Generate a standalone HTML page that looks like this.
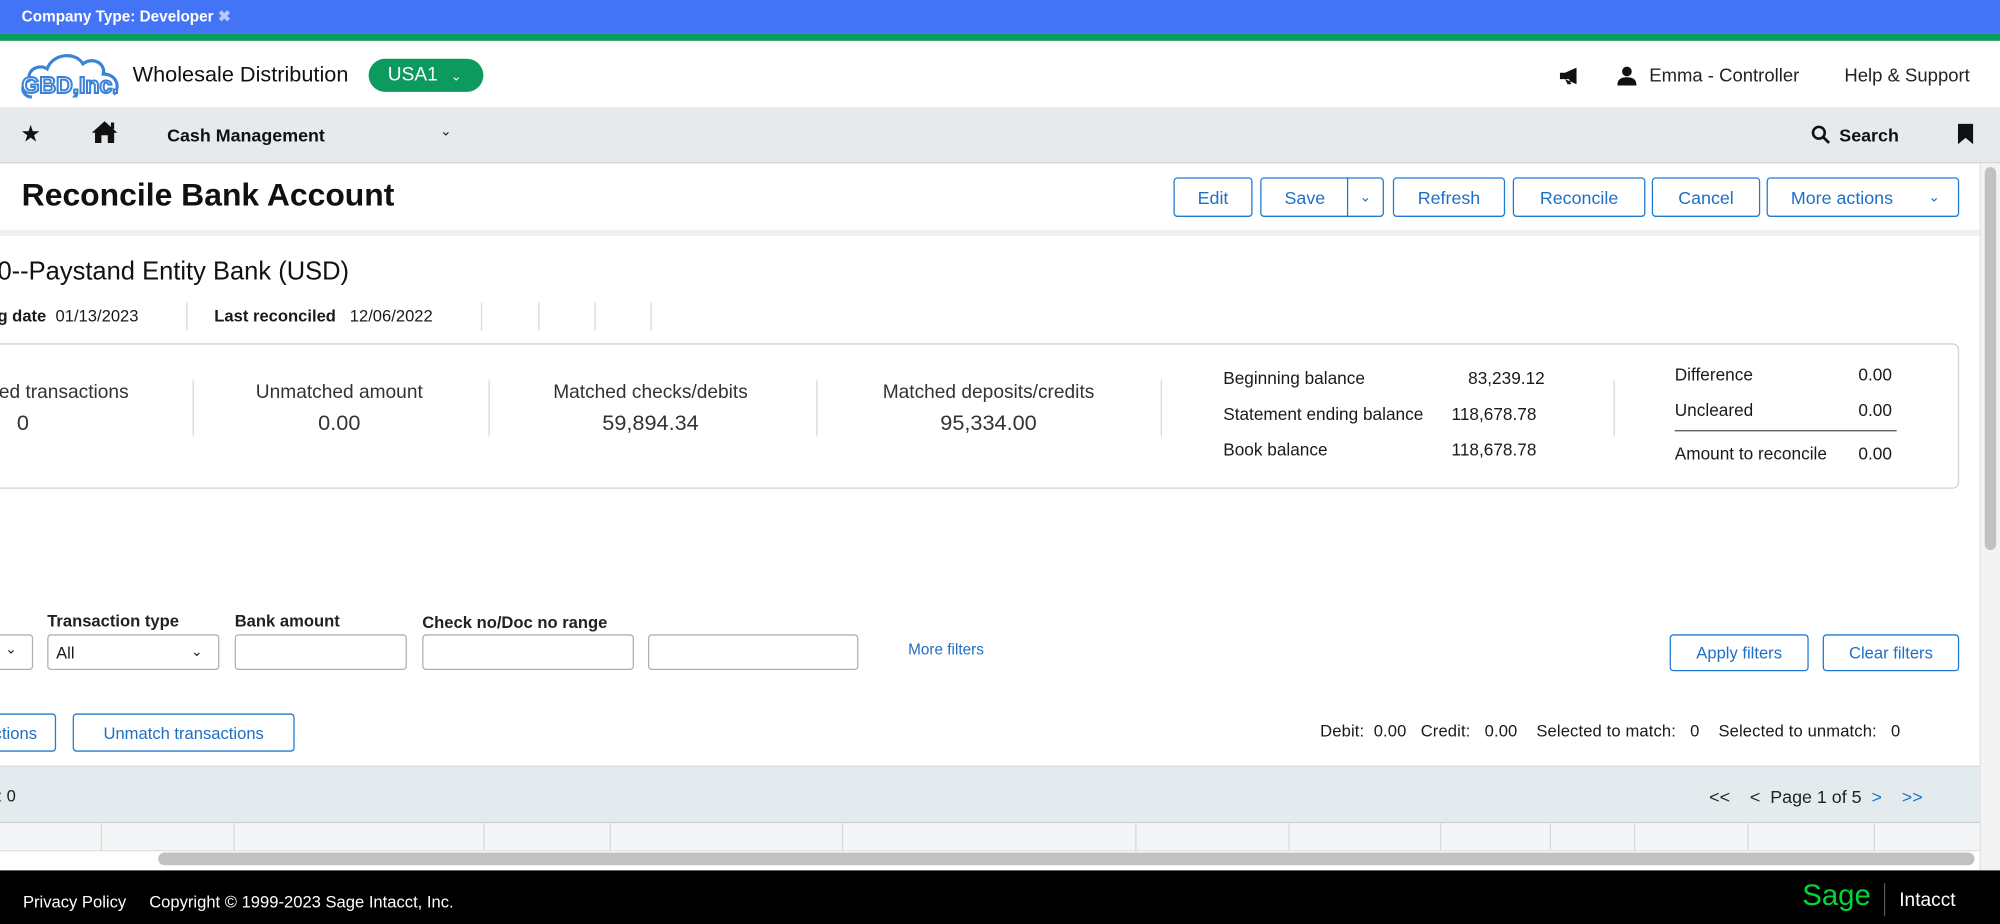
<!DOCTYPE html>
<html><head><meta charset="utf-8"><style>
*{box-sizing:border-box;margin:0;padding:0}
html,body{width:2000px;height:924px;overflow:hidden;background:#fff}
#f{position:absolute;left:0;top:0;width:1568px;height:724px;transform-origin:0 0;transform:scale(1.27551,1.27624);font-family:"Liberation Sans",sans-serif;color:#1a1a1a;font-size:13px;overflow:hidden}
.a{position:absolute;white-space:nowrap}
.btn{position:absolute;height:31px;border:1.5px solid #1f7ad1;border-radius:3px;color:#1f6fc4;font-size:14px;display:flex;align-items:center;justify-content:center;background:#fff}
.inp{position:absolute;height:28px;border:1px solid #aab2b8;border-radius:3px;background:#fff}
.lbl{position:absolute;font-size:13px;font-weight:bold;color:#222}
.vl{position:absolute;width:1px;background:#d5dadd}
.c{position:absolute;text-align:center;font-size:15px;color:#333}
</style></head><body><div id="f">
<div class="a" style="left:0;top:0;width:1568px;height:26px;background:#4474f6"></div>
<div class="a" style="left:17px;top:6px;color:#fff;font-weight:bold;font-size:12px">Company Type: Developer <span style="color:#b8c8f5">✖</span></div>
<div class="a" style="left:0;top:26px;width:1568px;height:6px;background:#0c9a5e"></div>
<svg class="a" style="left:15px;top:38px" width="82" height="42" viewBox="0 0 82 42"><path d="M10 38 C2 38 0 28 8 25 C6 16 16 12 22 16 C26 4 44 2 50 12 C58 6 68 12 66 20 C76 20 80 30 74 36" fill="none" stroke="#3b83d6" stroke-width="2.5"/><text x="40" y="35" text-anchor="middle" font-family="Liberation Sans" font-weight="bold" font-size="18" fill="#fff" stroke="#3b83d6" stroke-width="1.6">GBD,Inc.</text></svg>
<div class="a" style="left:104px;top:49px;font-size:17px;color:#111">Wholesale Distribution</div>
<div class="a" style="left:289px;top:46px;width:90px;height:26px;border-radius:13px;background:#0c9a5e;color:#fff;font-size:15px;line-height:26px;padding-left:15px">USA1 <span style="font-size:10px;margin-left:6px">⌄</span></div>
<svg class="a" style="left:1222px;top:52px" width="18" height="15" viewBox="0 0 18 15"><path d="M1 5h4l9-4v13l-9-4H1z M5 10l2 4h3l-2-4" fill="#111"/></svg>
<svg class="a" style="left:1268px;top:52px" width="15" height="15" viewBox="0 0 15 15"><circle cx="7.5" cy="4" r="3.8" fill="#111"/><path d="M0 15c0-5 3-6.5 7.5-6.5S15 10 15 15z" fill="#111"/></svg>
<div class="a" style="left:1293px;top:52px;font-size:14.5px;color:#222">Emma - Controller</div>
<div class="a" style="left:1446px;top:52px;font-size:14.5px;color:#222">Help &amp; Support</div>
<div class="a" style="left:0;top:84px;width:1568px;height:44px;background:#e6eaed;border-bottom:1px solid #d3d8db"></div>
<div class="a" style="left:16px;top:95px;font-size:18px;color:#111">★</div>
<svg class="a" style="left:71px;top:94px" width="22" height="19" viewBox="0 0 22 19"><path d="M11 1 L21 10 L18.5 10 L18.5 18 L13.5 18 L13.5 12 L8.5 12 L8.5 18 L3.5 18 L3.5 10 L1 10 Z" fill="#111"/><rect x="16" y="2" width="2.5" height="5" fill="#111"/></svg>
<div class="a" style="left:131px;top:97px;font-size:14px;font-weight:bold;color:#111;line-height:18px">Cash Management</div>
<div class="a" style="left:345px;top:96px;font-size:11px">⌄</div>
<svg class="a" style="left:1420px;top:98px" width="15" height="15" viewBox="0 0 15 15"><circle cx="6" cy="6" r="4.6" fill="none" stroke="#111" stroke-width="2"/><path d="M9.5 9.5L14 14" stroke="#111" stroke-width="2.2"/></svg>
<div class="a" style="left:1442px;top:98px;font-size:14px;font-weight:bold;color:#111">Search</div>
<svg class="a" style="left:1535px;top:97px" width="12" height="16" viewBox="0 0 12 16"><path d="M0 0h12v16L6 11 0 16z" fill="#111"/></svg>
<div class="a" style="left:17px;top:139px;font-size:25px;font-weight:bold;color:#111">Reconcile Bank Account</div>
<div class="btn" style="left:920px;top:139px;width:62px">Edit</div>
<div class="btn" style="left:988px;top:139px;width:70px;border-radius:3px 0 0 3px">Save</div>
<div class="btn" style="left:1056px;top:139px;width:29px;border-radius:0 3px 3px 0;font-size:11px">⌄</div>
<div class="btn" style="left:1092px;top:139px;width:88px">Refresh</div>
<div class="btn" style="left:1186px;top:139px;width:104px">Reconcile</div>
<div class="btn" style="left:1295px;top:139px;width:85px">Cancel</div>
<div class="btn" style="left:1385px;top:139px;width:151px;justify-content:flex-start;padding-left:18px">More actions<span style="position:absolute;right:14px;font-size:11px">⌄</span></div>
<div class="a" style="left:0;top:180px;width:1552px;height:5px;background:#eef1f3"></div>
<div class="a" style="left:1552px;top:128px;width:16px;height:554px;background:#f3f3f3;border-left:1px solid #e2e2e2"></div>
<div class="a" style="left:1556px;top:131px;width:9px;height:300px;background:#c1c1c1;border-radius:5px"></div>
<div class="a" style="left:-2px;top:202px;font-size:20px;color:#111">0--Paystand Entity Bank (USD)</div>
<div class="a" style="left:-2px;top:240px;font-size:13px"><b>g date</b>&nbsp;&nbsp;01/13/2023</div>
<div class="vl" style="left:146px;top:237px;height:22px"></div>
<div class="a" style="left:168px;top:240px;font-size:13px"><b>Last reconciled</b>&nbsp;&nbsp;&nbsp;12/06/2022</div>
<div class="vl" style="left:377px;top:237px;height:22px"></div>
<div class="vl" style="left:422px;top:237px;height:22px"></div>
<div class="vl" style="left:466px;top:237px;height:22px"></div>
<div class="vl" style="left:510px;top:237px;height:22px"></div>
<div class="a" style="left:-10px;top:269px;width:1546px;height:114px;border:1px solid #cdd3d7;border-radius:5px"></div>
<div class="c" style="left:-40px;top:299px;width:180px">ed transactions</div><div class="c" style="left:-72px;top:322px;width:180px;font-size:17px">0</div>
<div class="vl" style="left:151px;top:298px;height:44px"></div>
<div class="c" style="left:176px;top:299px;width:180px">Unmatched amount</div><div class="c" style="left:176px;top:322px;width:180px;font-size:17px">0.00</div>
<div class="vl" style="left:383px;top:298px;height:44px"></div>
<div class="c" style="left:410px;top:299px;width:200px">Matched checks/debits</div><div class="c" style="left:410px;top:322px;width:200px;font-size:17px">59,894.34</div>
<div class="vl" style="left:640px;top:298px;height:44px"></div>
<div class="c" style="left:670px;top:299px;width:210px">Matched deposits/credits</div><div class="c" style="left:670px;top:322px;width:210px;font-size:17px">95,334.00</div>
<div class="vl" style="left:910px;top:298px;height:44px"></div>
<div class="a" style="left:959px;top:289px;font-size:13.5px">Beginning balance</div><div class="a" style="left:1151px;top:289px;font-size:13.5px">83,239.12</div>
<div class="a" style="left:959px;top:317px;font-size:13.5px">Statement ending balance</div><div class="a" style="left:1138px;top:317px;font-size:13.5px">118,678.78</div>
<div class="a" style="left:959px;top:345px;font-size:13.5px">Book balance</div><div class="a" style="left:1138px;top:345px;font-size:13.5px">118,678.78</div>
<div class="vl" style="left:1265px;top:298px;height:44px"></div>
<div class="a" style="left:1313px;top:286px;font-size:13.5px">Difference</div><div class="a" style="left:1457px;top:286px;font-size:13.5px">0.00</div>
<div class="a" style="left:1313px;top:314px;font-size:13.5px">Uncleared</div><div class="a" style="left:1457px;top:314px;font-size:13.5px">0.00</div>
<div class="a" style="left:1313px;top:337px;width:174px;height:1px;background:#555"></div>
<div class="a" style="left:1313px;top:348px;font-size:13.5px">Amount to reconcile</div><div class="a" style="left:1457px;top:348px;font-size:13.5px">0.00</div>
<div class="inp" style="left:-10px;top:497px;width:36px"></div><div class="a" style="left:4px;top:502px;font-size:11px">⌄</div>
<div class="lbl" style="left:37px;top:479px">Transaction type</div>
<div class="inp" style="left:37px;top:497px;width:135px;padding:6px 6px;font-size:13px">All<span style="position:absolute;right:12px;font-size:11px">⌄</span></div>
<div class="lbl" style="left:184px;top:479px">Bank amount</div>
<div class="inp" style="left:184px;top:497px;width:135px"></div>
<div class="lbl" style="left:331px;top:480px">Check no/Doc no range</div>
<div class="inp" style="left:331px;top:497px;width:166px"></div>
<div class="inp" style="left:508px;top:497px;width:165px"></div>
<div class="a" style="left:712px;top:502px;font-size:12px;color:#1f6fc4">More filters</div>
<div class="btn" style="left:1309px;top:497px;width:109px;height:29px;font-size:13px">Apply filters</div>
<div class="btn" style="left:1429px;top:497px;width:107px;height:29px;font-size:13px">Clear filters</div>
<div class="btn" style="left:-40px;top:559px;width:84px;height:30px;font-size:13px;justify-content:flex-end;padding-right:14px">ctions</div>
<div class="btn" style="left:57px;top:559px;width:174px;height:30px;font-size:13px">Unmatch transactions</div>
<div class="a" style="left:1035px;top:565px;letter-spacing:0.1px">Debit:&nbsp;&nbsp;0.00&nbsp;&nbsp;&nbsp;Credit:&nbsp;&nbsp;&nbsp;0.00&nbsp;&nbsp;&nbsp;&nbsp;Selected to match:&nbsp;&nbsp;&nbsp;0&nbsp;&nbsp;&nbsp;&nbsp;Selected to unmatch:&nbsp;&nbsp;&nbsp;0</div>
<div class="a" style="left:0;top:600px;width:1552px;height:45px;background:#e3ebee;border-top:1px solid #d5dcdf;border-bottom:1px solid #c9d2d6"></div>
<div class="a" style="left:-2px;top:616px;font-size:13px">: 0</div>
<div class="a" style="left:1340px;top:616px;font-size:14px;color:#222">&lt;&lt;&nbsp;&nbsp;&nbsp;&nbsp;&lt;&nbsp;&nbsp;Page 1 of 5&nbsp;&nbsp;<span style="color:#1f6fc4">&gt;&nbsp;&nbsp;&nbsp;&nbsp;&gt;&gt;</span></div>
<div class="a" style="left:0;top:645px;width:1552px;height:22px;background:#f3f5f6;border-bottom:1px solid #dde2e5"></div>
<div class="vl" style="left:79px;top:645px;height:22px"></div><div class="vl" style="left:183px;top:645px;height:22px"></div><div class="vl" style="left:379px;top:645px;height:22px"></div><div class="vl" style="left:478px;top:645px;height:22px"></div><div class="vl" style="left:660px;top:645px;height:22px"></div><div class="vl" style="left:890px;top:645px;height:22px"></div><div class="vl" style="left:1010px;top:645px;height:22px"></div><div class="vl" style="left:1129px;top:645px;height:22px"></div><div class="vl" style="left:1215px;top:645px;height:22px"></div><div class="vl" style="left:1281px;top:645px;height:22px"></div><div class="vl" style="left:1370px;top:645px;height:22px"></div><div class="vl" style="left:1469px;top:645px;height:22px"></div>
<div class="a" style="left:124px;top:668px;width:1424px;height:10px;background:#c1c1c1;border-radius:5px"></div>
<div class="a" style="left:0;top:682px;width:1568px;height:42px;background:#000"></div>
<div class="a" style="left:18px;top:699px;color:#fff;font-size:13px">Privacy Policy&nbsp;&nbsp;&nbsp;&nbsp;&nbsp;Copyright © 1999-2023 Sage Intacct, Inc.</div>
<div class="a" style="left:1413px;top:688px;color:#00d639;font-size:23px">Sage</div>
<div class="a" style="left:1477px;top:692px;width:1px;height:26px;background:#555"></div>
<div class="a" style="left:1489px;top:697px;color:#fff;font-size:15px">Intacct</div>
</div></body></html>
